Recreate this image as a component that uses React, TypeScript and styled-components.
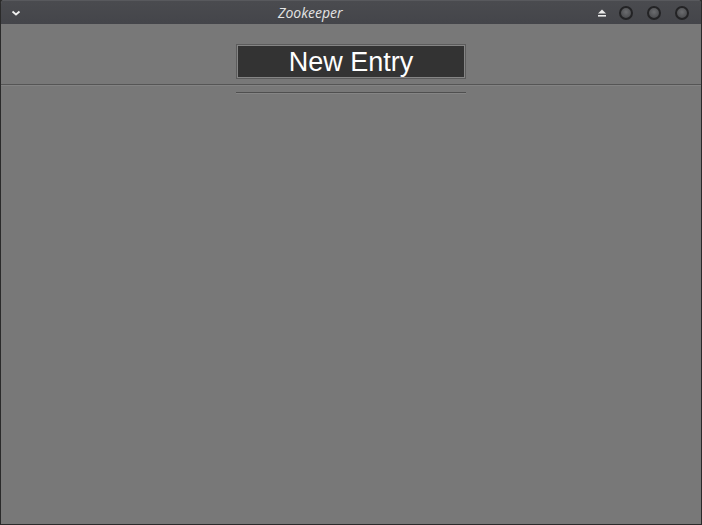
import React from "react";
import styled, { createGlobalStyle } from "styled-components";

const Global = createGlobalStyle`
  html, body { margin: 0; padding: 0; background: #2b2b2b; }
  body { width: 702px; height: 525px; overflow: hidden; }
  #root { width: 702px; height: 525px; }
`;

const Window = styled.div`
  box-sizing: border-box;
  width: 702px;
  height: 525px;
  display: flex;
  flex-direction: column;
  background: #787878;
  border: 1px solid #2a2a2a;
  border-top: none;
  border-radius: 4px 4px 0 0;
  overflow: hidden;
`;

const TitleBar = styled.div`
  height: 24px;
  flex: none;
  display: flex;
  align-items: center;
  background: linear-gradient(#4a4b4f, #44454a);
  border-top: 1px solid #58595d;
  box-sizing: border-box;
  padding: 0 12px 0 9px;
`;

const Left = styled.div`
  width: 12px;
  display: flex;
  align-items: center;
`;

const Title = styled.div`
  font-family: "Open Sans", "Noto Sans", sans-serif;
  font-style: italic;
  font-size: 14px;
  color: #e4e4e4;
  margin-left: 256px;
`;

const Right = styled.div`
  flex: 1;
  display: flex;
  align-items: center;
  justify-content: flex-end;
  gap: 14px;
`;

const Circle = styled.div`
  width: 14px;
  height: 14px;
  border-radius: 50%;
  box-sizing: border-box;
  border: 2px solid #232325;
  background: radial-gradient(circle at 50% 40%, #6b6c6f, #4b4c4f 75%);
`;

const Eject = styled.svg`
  margin-right: -2px;
`;

const Body = styled.div`
  flex: 1;
  display: flex;
  flex-direction: column;
`;

const Header = styled.div`
  display: flex;
  justify-content: center;
  padding: 20px 0 5px;
`;

const EntryBox = styled.div`
  width: 230px;
  height: 35px;
  box-sizing: border-box;
  border: 1px solid #5c5c5c;
  box-shadow: inset 0 0 0 1px #858585;
  padding: 1px;
  display: flex;
`;

const EntryInner = styled.div`
  flex: 1;
  background: #333333;
  display: flex;
  align-items: center;
  justify-content: center;
  font-family: "Liberation Sans", Arial, sans-serif;
  font-size: 27px;
  color: #ffffff;
  padding-top: 1px;
`;

const Divider = styled.div`
  height: 1px;
  background: #555555;
  box-shadow: 0 1px 0 #838383;
`;

const SubRow = styled.div`
  display: flex;
  justify-content: center;
  padding-top: 7px;
`;

const ShortLine = styled.div`
  width: 230px;
  height: 1px;
  background: #4f4f4f;
  box-shadow: 0 1px 0 #858585;
`;

export default function App() {
  return (
    <>
      <Global />
      <Window>
        <TitleBar>
          <Left>
            <svg width="12" height="12" viewBox="0 0 12 12">
              <path d="M2.5 4.5 L6 7.5 L9.5 4.5" stroke="#f0f0f0" strokeWidth="1.8" fill="none" />
            </svg>
          </Left>
          <Title>Zookeeper</Title>
          <Right>
            <Eject width="10" height="10" viewBox="0 0 10 10">
              <path d="M5 1.5 L9 5.5 H1 Z" fill="#ececec" />
              <rect x="1" y="7" width="8" height="1.6" fill="#ececec" />
            </Eject>
            <Circle />
            <Circle />
            <Circle />
          </Right>
        </TitleBar>
        <Body>
          <Header>
            <EntryBox>
              <EntryInner>New Entry</EntryInner>
            </EntryBox>
          </Header>
          <Divider />
          <SubRow>
            <ShortLine />
          </SubRow>
        </Body>
      </Window>
    </>
  );
}
